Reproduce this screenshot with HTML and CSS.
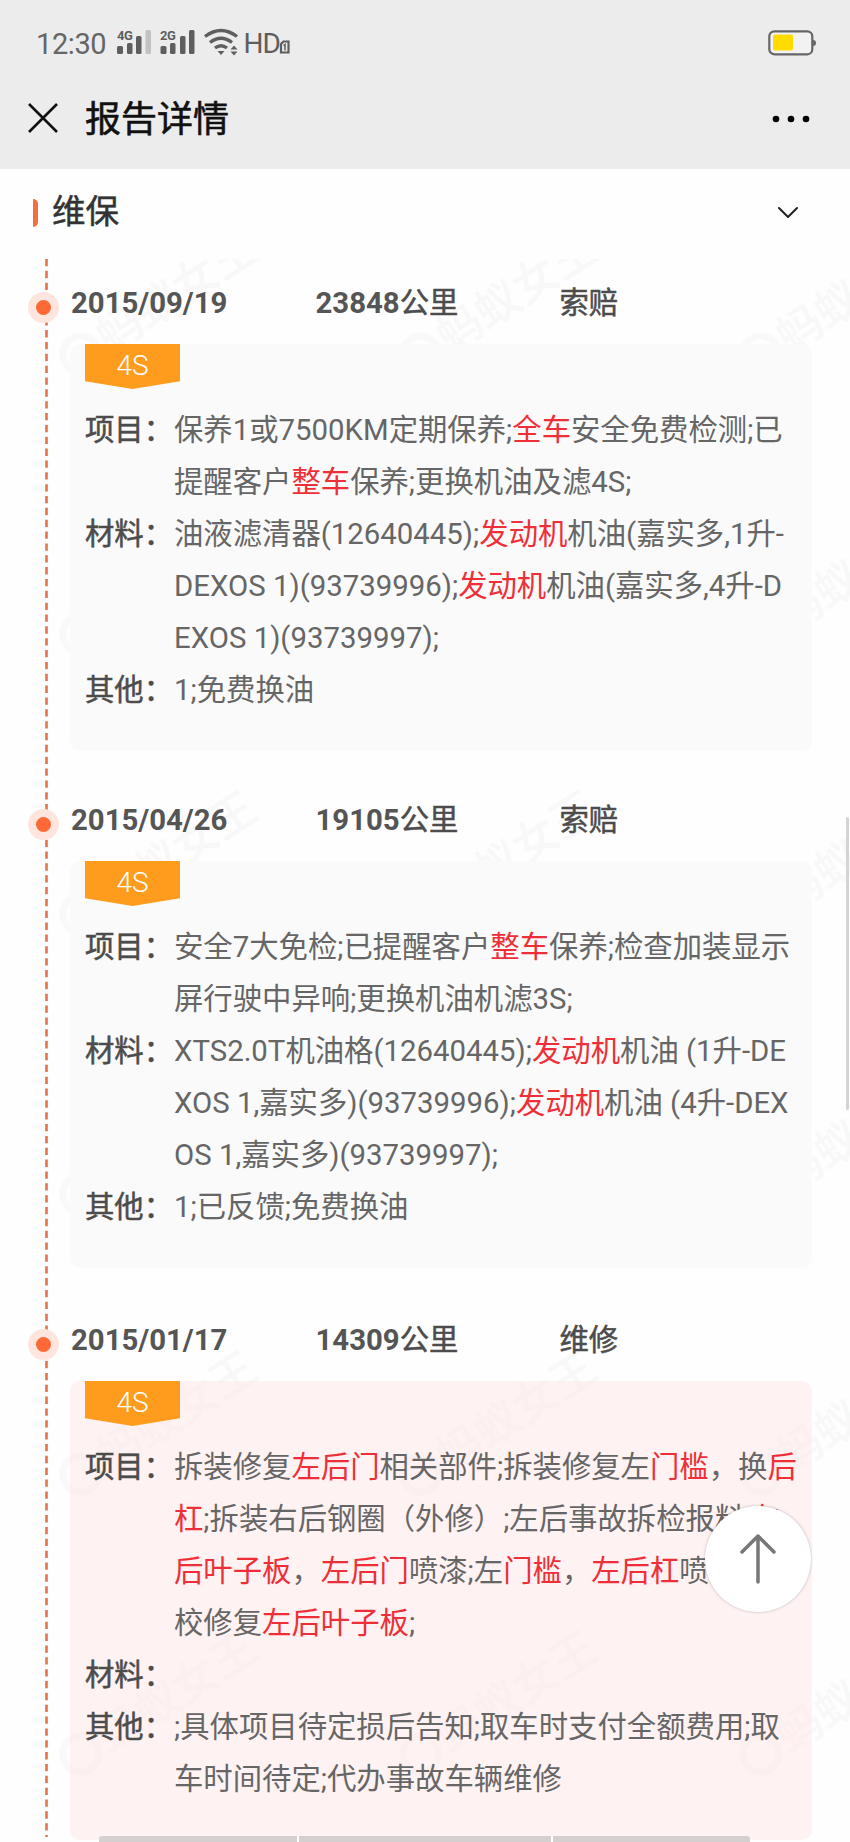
FILE: index.html
```html
<!DOCTYPE html>
<html lang="zh-CN">
<head>
<meta charset="utf-8">
<title>报告详情</title>
<link rel="stylesheet" href="styles.css">
</head>
<body>
<div class="screen">
  <header class="top">
    <div class="status">
      <span class="clock">12:30</span>
      <svg class="signals" width="178" height="28" viewBox="0 0 178 28">
        <g fill="#5e5e5e">
          <text class="net" x="0" y="11">4G</text>
          <rect x="0" y="17" width="6" height="8" rx="1.5"/>
          <rect x="10" y="14" width="5.500" height="11" rx="1.5"/>
          <rect x="19" y="7" width="5.500" height="18" rx="1.5"/>
          <rect x="28.500" y="1" width="5.500" height="24" rx="1.5" fill="#c2c2c2"/>
          <text class="net" x="43" y="11">2G</text>
          <rect x="43.500" y="17" width="6" height="8" rx="1.5"/>
          <rect x="53" y="14" width="5.500" height="11" rx="1.5"/>
          <rect x="63" y="7" width="5.500" height="18" rx="1.500"/>
          <rect x="72" y="1" width="5.500" height="24" rx="1.500"/>
          <path d="M100.500 22h7l-3.500 4zM113.500 20.500l3.500-4 3.500 4zM113.500 22.500h7l-3.500 4z"/>
        </g>
        <g fill="none" stroke="#5e5e5e" stroke-width="3.400">
          <path d="M88 7.500Q104-4.500 120 7.500M93 13.500Q104 5 115 13.500M98 19Q104 14.500 110 19"/>
        </g>
        <text class="hd" x="126.500" y="24">HD</text>
        <path d="M164 23.500V15l2.500-2.500h5v11z" fill="none" stroke="#5e5e5e" stroke-width="2.200"/>
        <path d="M166.500 16.500l1.500-1v6" fill="none" stroke="#5e5e5e" stroke-width="1.500"/>
      </svg>
      <svg class="battery" width="48" height="26" viewBox="0 0 48 26">
        <rect x="1.300" y="1.300" width="43" height="23" rx="5" fill="#f2f2f2" stroke="#666" stroke-width="2.200"/>
        <path d="M45 10q3 0 3 3t-3 3z" fill="#666"/>
        <rect x="5" y="4.500" width="20" height="16" rx="2" fill="#ffdb00"/>
      </svg>
    </div>
    <div class="nav">
      <svg class="close" width="30" height="30" viewBox="0 0 30 30"><path d="M1 1L29 29M29 1L1 29" stroke="#111" stroke-width="2.600"/></svg>
      <h1 class="nav-title">报告详情</h1>
      <svg class="more" width="38" height="8" viewBox="0 0 38 8"><circle cx="4" cy="4" r="3.300"/><circle cx="19" cy="4" r="3.300"/><circle cx="34" cy="4" r="3.300"/></svg>
    </div>
  </header>

  <section class="section-head">
    <span class="accent"></span>
    <h2 class="section-title">维保</h2>
    <svg class="chevron" width="20" height="12" viewBox="0 0 20 12"><path d="M1 1L10 10L19 1" fill="none" stroke="#222" stroke-width="2" stroke-linecap="round" stroke-linejoin="round"/></svg>
  </section>

  <main class="timeline">
    <svg class="watermark" width="850" height="1583" viewBox="0 0 850 1583">
      <defs>
        <g id="mark">
          <circle cx="20" cy="0" r="18" fill="none" stroke="#f9f9f9" stroke-width="7"/>
          <text class="mark-text" x="44" y="16">蚂蚁女王</text>
        </g>
        <g id="row">
          <use href="#mark" transform="translate(64 106) rotate(-33)"/>
          <use href="#mark" transform="translate(404 106) rotate(-33)"/>
          <use href="#mark" transform="translate(744 106) rotate(-33)"/>
        </g>
      </defs>
      <use href="#row"/><use href="#row" y="280"/><use href="#row" y="560"/>
      <use href="#row" y="840"/><use href="#row" y="1120"/><use href="#row" y="1400"/>
    </svg>
    <svg class="rail" width="3" height="1578" viewBox="0 0 3 1578"><path d="M1.500 0V1578" stroke="#e2734c" stroke-width="2.600" stroke-dasharray="7.300 4.550"/></svg>

    <article class="entry">
      <div class="entry-head"><i class="dot"></i><b>2015/09/19</b><b>23848<span>公里</span></b><b><span>索赔</span></b></div>
      <div class="card">
        <span class="tag">4S</span>
        <dl class="facts">
          <dt>项目：</dt><dd>保养1或7500KM定期保养;<em>全车</em>安全免费检测;已<br>提醒客户<em>整车</em>保养;更换机油及滤4S;</dd>
          <dt>材料：</dt><dd>油液滤清器(12640445);<em>发动机</em>机油(嘉实多,1升-<br>DEXOS 1)(93739996);<em>发动机</em>机油(嘉实多,4升-D<br>EXOS 1)(93739997);</dd>
          <dt>其他：</dt><dd>1;免费换油</dd>
        </dl>
      </div>
    </article>

    <article class="entry">
      <div class="entry-head"><i class="dot"></i><b>2015/04/26</b><b>19105<span>公里</span></b><b><span>索赔</span></b></div>
      <div class="card">
        <span class="tag">4S</span>
        <dl class="facts">
          <dt>项目：</dt><dd>安全7大免检;已提醒客户<em>整车</em>保养;检查加装显示<br>屏行驶中异响;更换机油机滤3S;</dd>
          <dt>材料：</dt><dd>XTS2.0T机油格(12640445);<em>发动机</em>机油 (1升-DE<br>XOS 1,嘉实多)(93739996);<em>发动机</em>机油 (4升-DEX<br>OS 1,嘉实多)(93739997);</dd>
          <dt>其他：</dt><dd>1;已反馈;免费换油</dd>
        </dl>
      </div>
    </article>

    <article class="entry">
      <div class="entry-head"><i class="dot"></i><b>2015/01/17</b><b>14309<span>公里</span></b><b><span>维修</span></b></div>
      <div class="card card-alert">
        <span class="tag">4S</span>
        <dl class="facts">
          <dt>项目：</dt><dd>拆装修复<em>左后门</em>相关部件;拆装修复左<em>门槛</em>，换<em>后</em><br><em>杠</em>;拆装右后钢圈（外修）;左后事故拆检报料;<em>左</em>;<br><em>后叶子板</em>，<em>左后门</em>喷漆;左<em>门槛</em>，<em>左后杠</em>喷漆;<br>校修复<em>左后叶子板</em>;</dd>
          <dt>材料：</dt><dd></dd>
          <dt>其他：</dt><dd>;具体项目待定损后告知;取车时支付全额费用;取<br>车时间待定;代办事故车辆维修</dd>
        </dl>
      </div>
    </article>
  </main>

  <div class="scrollbar"></div>
  <div class="to-top"><svg width="36" height="50" viewBox="0 0 36 50"><path d="M18 48V3M2 18L18 2L34 18" fill="none" stroke="#777" stroke-width="3.500" stroke-linecap="round" stroke-linejoin="round"/></svg></div>
  <div class="bottom-tabs"><span></span><span></span><span></span></div>
</div>
</body>
</html>
```
FILE: styles.css
```css
* { box-sizing: border-box; }
body { margin: 0; background: #fff; font-family: Roboto, "Noto Sans CJK SC", sans-serif; }
h1, h2, dl, dd { margin: 0; font-weight: 400; }
.screen { position: relative; width: 850px; height: 1842px; overflow: hidden; background: #fefefe; }

.top { height: 169px; background: #ececec; }
.status { display: flex; align-items: center; height: 86px; padding: 0 35px 0 36px; }
.clock { width: 81px; padding-top: 1px; font-size: 29px; line-height: 40px; color: #666; letter-spacing: -.4px; }
.signals { margin-top: -1px; overflow: visible; }
.net { font: 700 13px Roboto, sans-serif; letter-spacing: -.5px; }
.hd { font: 400 28px Roboto, sans-serif; fill: #5e5e5e; letter-spacing: -1px; }
.battery { position: relative; left: 1px; margin-left: auto; margin-top: -1px; }
.nav { display: flex; align-items: center; height: 64px; padding: 0 40px 0 28px; }
.nav-title { margin-left: 27px; padding-top: 3px; font-size: 36px; line-height: 50px; -webkit-text-stroke: .6px #111; color: #111; }
.more { margin-left: auto; margin-top: 1px; }

.section-head { display: flex; align-items: center; height: 90px; padding: 0 52px 6px 33px; }
.accent { width: 5px; height: 28px; margin-top: 3px; border-radius: 0 5px 5px 0; background: #f96d3d; }
.section-title { margin-left: 14px; padding-top: 1px; font-size: 33.500px; line-height: 48px; -webkit-text-stroke: .5px #333; color: #333; }
.chevron { margin-left: auto; margin-top: 3px; }

.timeline { position: relative; height: 1583px; }
.watermark { position: absolute; left: 0; top: 0; }
.mark-text { font: 500 45px "Noto Sans CJK SC", sans-serif; fill: #f8f8f8; }
.rail { position: absolute; left: 45px; top: 0; }
.entry { position: relative; padding: 0 38px 0 70px; margin-bottom: 25px; }
.entry + .entry { margin-bottom: 28px; }
.entry-head { position: relative; display: grid; grid-template-columns: 244.500px 244px auto; height: 85px; padding: 19px 0 0 1px; font-size: 29.330px; line-height: 50px; color: #555; }
.entry-head b { font-weight: 700; }
.entry-head span { font-weight: 400; -webkit-text-stroke: .5px #4c4c4c; color: #4c4c4c; }
.dot { position: absolute; left: -42px; top: 33px; width: 31px; height: 31px; border: 8px solid #fee6df; border-radius: 50%; background: #ff6837; }
.card { padding: 0 0 35px 15px; border-radius: 10px; background: #fafafa; }
.card-alert { background: rgba(255, 232, 231, .55); }
.tag { display: block; width: 95px; height: 45px; background: #ff9b1d; clip-path: polygon(0 0, 100% 0, 100% 83%, 50% 100%, 0 83%); color: #fff; font-size: 28px; font-weight: 300; line-height: 43px; text-align: center; }
.facts { display: grid; grid-template-columns: 89px auto; padding-top: 15px; font-size: 29.360px; line-height: 52px; white-space: nowrap; color: #666; }
.facts dt { font-weight: 400; -webkit-text-stroke: .5px #4c4c4c; color: #4c4c4c; }
.facts em { font-style: normal; color: #ee2f38; }

.scrollbar { position: absolute; right: 1px; top: 817px; width: 3px; height: 293px; border-radius: 2px; background: #d4d4d4; }
.to-top { position: absolute; left: 705px; top: 1506px; display: flex; align-items: center; justify-content: center; width: 106px; height: 106px; border-radius: 50%; background: #fff; box-shadow: 0 0 3px rgba(0, 0, 0, .25); }
.bottom-tabs { position: absolute; left: 99px; top: 1836px; display: grid; grid-template-columns: 198px 252px 197px; gap: 2px; width: 651px; height: 6px; border-radius: 3px 3px 0 0; overflow: hidden; background: #fff; }
.bottom-tabs span { background: #d6cfcf; }
```
